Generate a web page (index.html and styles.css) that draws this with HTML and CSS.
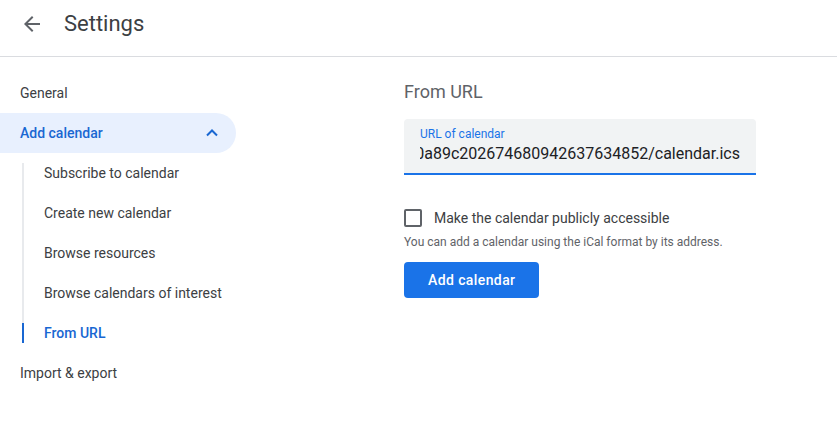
FILE: index.html
```html
<!DOCTYPE html>
<html lang="en">
<head>
<meta charset="utf-8">
<title>Settings</title>
<link rel="stylesheet" href="styles.css">
</head>
<body>
<header class="topbar">
  <button class="back" aria-label="Back">
    <svg width="24" height="24" viewBox="0 0 24 24"><path d="M20 11H7.83l5.59-5.59L12 4l-8 8 8 8 1.41-1.41L7.83 13H20v-2z" fill="#5f6368"/></svg>
  </button>
  <h1 class="title">Settings</h1>
</header>
<div class="layout">
  <nav class="sidebar">
    <div class="nav-item">General</div>
    <div class="nav-item open">
      <span>Add calendar</span>
      <svg width="20" height="20" viewBox="0 0 20 20"><path d="M5 12.5l5-5 5 5" fill="none" stroke="#1967d2" stroke-width="2"/></svg>
    </div>
    <div class="subnav">
      <div class="sub-item">Subscribe to calendar</div>
      <div class="sub-item">Create new calendar</div>
      <div class="sub-item">Browse resources</div>
      <div class="sub-item">Browse calendars of interest</div>
      <div class="sub-item active">From URL</div>
    </div>
    <div class="nav-item">Import &amp; export</div>
  </nav>
  <main class="main">
    <h2 class="section-title">From URL</h2>
    <div class="field">
      <div class="field-label">URL of calendar</div>
      <div class="field-value"><span>https://calendar.example.com/ical/6d0a89c202674680942637634852/calendar.ics</span></div>
    </div>
    <label class="check-row">
      <span class="checkbox"></span>
      <span class="check-label">Make the calendar publicly accessible</span>
    </label>
    <p class="helper">You can add a calendar using the iCal format by its address.</p>
    <button class="primary">Add calendar</button>
  </main>
</div>
</body>
</html>
```
FILE: styles.css
```css
* { box-sizing: border-box; }
body {
  margin: 0;
  font-family: Roboto, "Liberation Sans", Arial, sans-serif;
  color: #3c4043;
  background: #fff;
}
.topbar {
  height: 57px;
  border-bottom: 1px solid #dadce0;
  display: flex;
  align-items: center;
  padding: 0 0 8px 20px;
  gap: 20px;
}
.back {
  width: 24px;
  height: 24px;
  padding: 0;
  border: 0;
  background: none;
  display: flex;
}
.title {
  margin: 0;
  font-size: 22px;
  font-weight: 400;
  color: #3c4043;
  line-height: 28px;
}
.layout {
  display: flex;
  padding-top: 16px;
}
.sidebar {
  width: 236px;
  flex-shrink: 0;
}
.nav-item {
  height: 40px;
  display: flex;
  align-items: center;
  justify-content: space-between;
  padding: 0 14px 0 20px;
  font-size: 14px;
  color: #3c4043;
}
.nav-item.open {
  background: #e8f0fe;
  color: #1967d2;
  font-weight: 500;
  border-radius: 0 20px 20px 0;
}
.nav-item.open svg { display: block; }
.subnav {
  display: flex;
  flex-direction: column;
  margin: 10px 0 10px 22px;
  border-left: 2px solid #e8eaed;
}
.sub-item {
  height: 40px;
  display: flex;
  align-items: center;
  padding-left: 20px;
  font-size: 14px;
  color: #3c4043;
  position: relative;
}
.sub-item:first-child { margin-top: -10px; }
.sub-item:last-child { margin-bottom: -10px; }
.sub-item.active {
  color: #1967d2;
  font-weight: 500;
}
.sub-item.active::before {
  content: "";
  position: absolute;
  left: -2px;
  top: 10px;
  width: 2px;
  height: 20px;
  background: #1967d2;
}
.main {
  margin-left: 168px;
  width: 352px;
}
.section-title {
  margin: 7px 0 0;
  font-size: 18px;
  line-height: 24px;
  font-weight: 400;
  color: #5f6368;
}
.field {
  margin-top: 15px;
  width: 352px;
  height: 56px;
  background: #f1f3f4;
  border-radius: 4px 4px 0 0;
  border-bottom: 2px solid #1a73e8;
  padding: 7px 16px 0 16px;
}
.field-label {
  font-size: 12px;
  line-height: 16px;
  color: #1a73e8;
}
.field-value {
  font-size: 16px;
  line-height: 24px;
  color: #202124;
  display: flex;
  justify-content: flex-end;
  overflow: hidden;
  white-space: nowrap;
}
.field-value span { flex-shrink: 0; }
.check-row {
  margin-top: 33px;
  height: 20px;
  display: flex;
  align-items: center;
  gap: 12px;
}
.checkbox {
  width: 18px;
  height: 18px;
  border: 2px solid #5f6368;
  border-radius: 2px;
}
.check-label {
  font-size: 14px;
  line-height: 20px;
  color: #3c4043;
}
.helper {
  margin: 6px 0 0;
  font-size: 12px;
  line-height: 16px;
  color: #5f6368;
  white-space: nowrap;
}
.primary {
  margin-top: 12px;
  height: 36px;
  padding: 0 24px;
  border: 0;
  border-radius: 4px;
  background: #1a73e8;
  color: #fff;
  font-family: inherit;
  font-size: 14px;
  font-weight: 500;
  letter-spacing: 0.4px;
}
```
